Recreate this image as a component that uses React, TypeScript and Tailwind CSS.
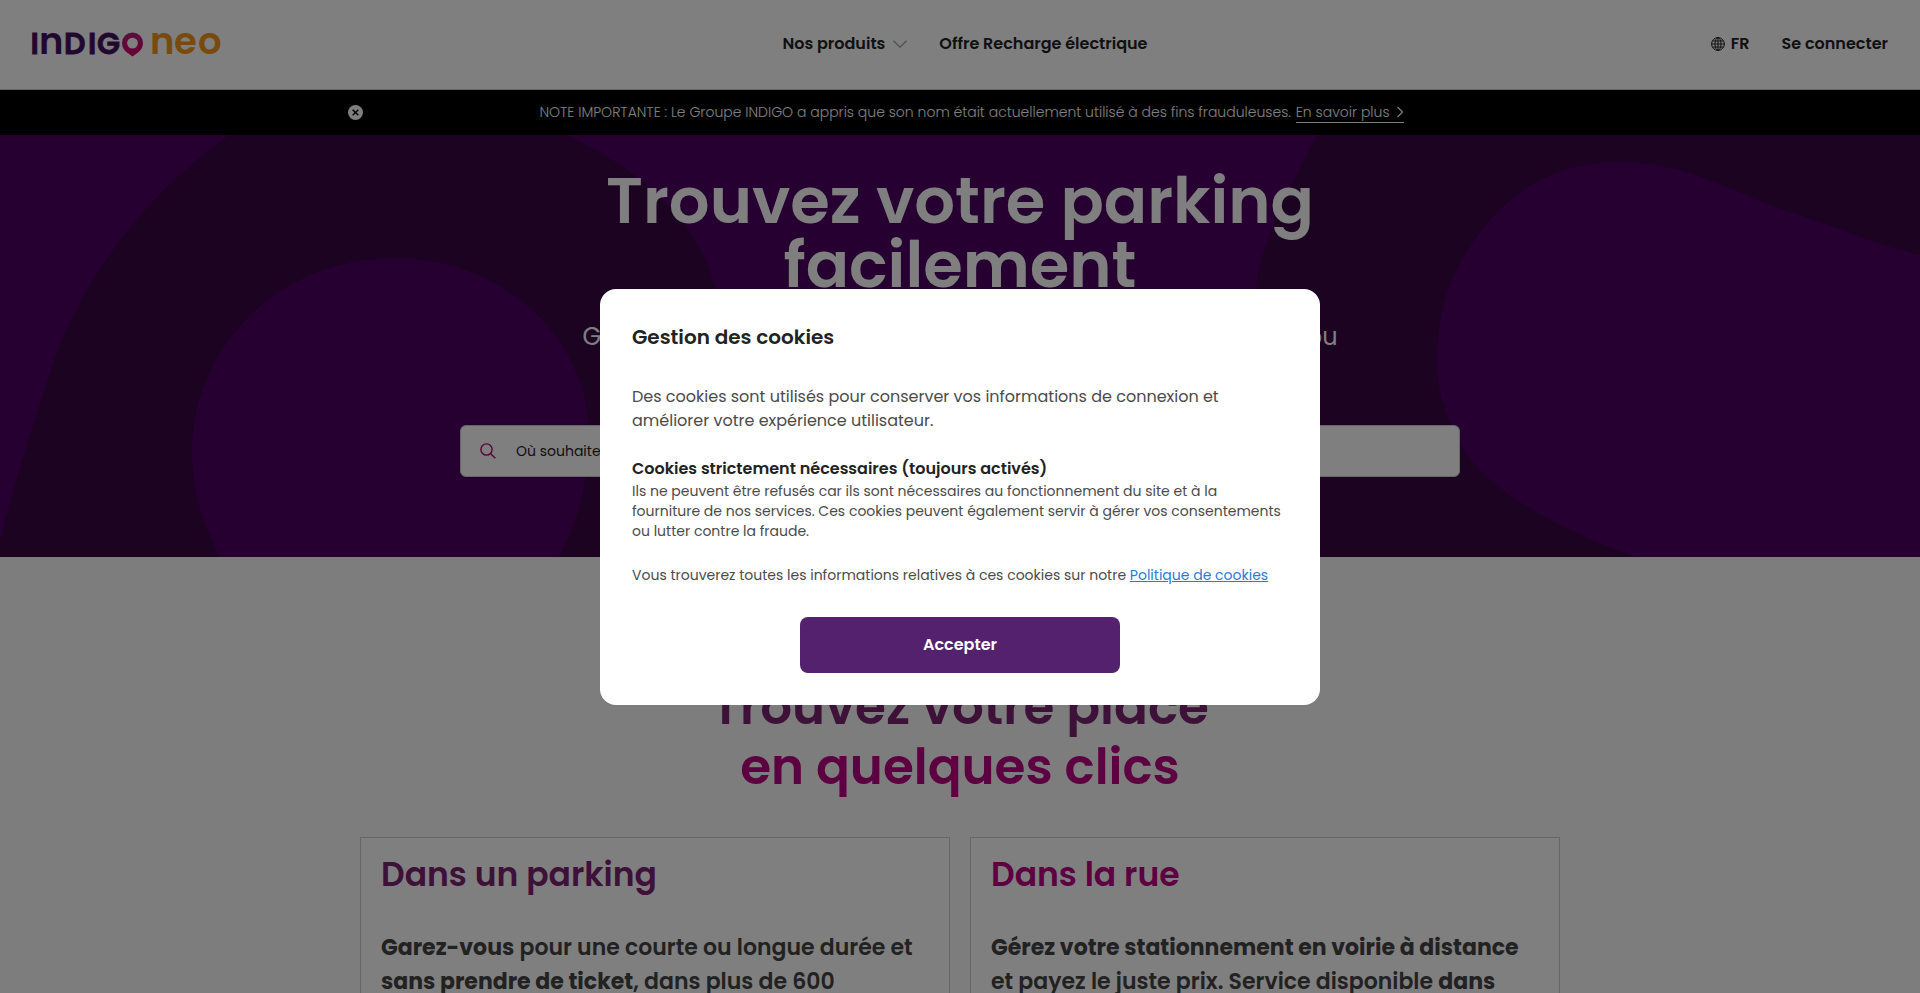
import React from "react";

function IndigoNeoLogo() {
  return (
    <svg
      width="190"
      height="24"
      viewBox="0 0 190 24"
      role="img"
      aria-label="INDIGO neo"
      className="block overflow-visible font-['Poppins',Inter,sans-serif] font-semibold"
    >
      <defs>
        <linearGradient id="pin" x1="0" y1="0" x2="0" y2="1">
          <stop offset="0" stopColor="#b4207c" />
          <stop offset="1" stopColor="#d6006e" />
        </linearGradient>
      </defs>
      <g fill="#43115f" fontSize="30">
        <g stroke="#43115f" strokeWidth="0.8">
          <text x="-1.500" y="21.500">I</text>
          <text x="32" y="21.500">D</text>
          <text x="56" y="21.500">I</text>
          <text x="65" y="21.500">G</text>
        </g>
        <text x="7" y="21.500" fontSize="37">n</text>
      </g>
      <path
        fill="url(#pin)"
        fillRule="evenodd"
        d="M100.5.5A10.500 10.500 0 0 0 90 11c0 4.200 2.100 7.300 5 9.400l5.500 4 5.500-4c2.900-2.100 5-5.200 5-9.400A10.500 10.500 0 0 0 100.500.5Zm0 5.200a5.400 5.400 0 1 1 0 10.800 5.400 5.400 0 0 1 0-10.800Z"
      />
      <g fill="#f0951c" fontSize="37">
        <text x="118" y="21.500">n</text>
        <text x="142" y="21.500">e</text>
        <text x="166" y="21.500">o</text>
      </g>
    </svg>
  );
}

function GlobeIcon() {
  return (
    <svg width="14" height="14" viewBox="0 0 14 14" fill="none" stroke="currentColor" strokeWidth="1" aria-hidden="true">
      <circle cx="7" cy="7" r="6.400" />
      <ellipse cx="7" cy="7" rx="3" ry="6.400" />
      <path d="M7 .6v12.800M.6 7h12.800M1.400 4h11.200M1.400 10h11.200" />
    </svg>
  );
}

function Header() {
  return (
    <header className="grid h-[90px] shrink-0 grid-cols-[1fr_auto_1fr] items-center border-b border-[#ccc] bg-white px-8 pb-0.5 text-base font-semibold text-[#222]">
      <a href="#accueil" className="w-fit">
        <IndigoNeoLogo />
      </a>
      <nav aria-label="Navigation principale" className="flex items-center gap-8 pl-2.5">
        <button type="button" className="flex items-center gap-2 font-semibold">
          Nos produits
          <svg width="14" height="8" viewBox="0 0 14 8" fill="none" stroke="#a0a0a0" strokeWidth="1.2" aria-hidden="true">
            <path d="M.5.8 7 7.200 13.500.8" />
          </svg>
        </button>
        <a href="#recharge">Offre Recharge électrique</a>
      </nav>
      <div className="flex items-center gap-8 justify-self-end">
        <button type="button" className="flex items-center gap-1.5 font-semibold">
          <GlobeIcon />
          FR
        </button>
        <a href="#connexion">Se connecter</a>
      </div>
    </header>
  );
}

function NoticeBar() {
  return (
    <div className="flex h-[45px] shrink-0 justify-center bg-black text-white">
      <div className="flex w-full max-w-[1224px] items-center">
        <button type="button" aria-label="Fermer" className="shrink-0">
          <svg width="15" height="15" viewBox="0 0 15 15" aria-hidden="true">
            <circle cx="7.500" cy="7.500" r="7.500" fill="#fff" />
            <path d="M4.700 4.700l5.600 5.600M10.300 4.700l-5.600 5.600" stroke="#000" strokeWidth="1.500" />
          </svg>
        </button>
        <p className="flex grow justify-center gap-[5px] pl-2 text-sm font-light">
          <span>
            NOTE IMPORTANTE : Le Groupe INDIGO a appris que son nom était actuellement utilisé à des fins frauduleuses.
          </span>
          <a href="#note" className="flex items-center gap-1.5 border-b border-white">
            En savoir plus
            <svg width="8" height="12" viewBox="0 0 8 12" fill="none" stroke="currentColor" strokeWidth="1.200" aria-hidden="true">
              <path d="M1.500 1 6.500 6 1.500 11" />
            </svg>
          </a>
        </p>
      </div>
    </div>
  );
}

function HeroBackdrop() {
  return (
    <svg
      className="absolute inset-0 h-full w-full"
      viewBox="0 0 1920 422"
      preserveAspectRatio="xMidYMid slice"
      aria-hidden="true"
    >
      <rect width="1920" height="422" fill="#4c0060" />
      <path
        fill="#380644"
        fillRule="evenodd"
        d="M229 0C135 68 82 150 53 228C33 290 17 340 0 405V422H720V180C712 110 670 50 567 0ZM220 422C200 385 192 350 192 318C192 210 280 123 395 123C505 123 589 205 589 300C589 345 577 390 559 422Z"
      />
      <path
        fill="#380644"
        d="M1317 0C1292 50 1262 100 1256 154C1240 250 1240 340 1250 422H1635C1540 388 1478 345 1460 308C1445 280 1437 255 1437 228C1437 180 1448 145 1468 115C1500 62 1550 27 1619 27C1680 27 1720 50 1770 70L1843 95C1870 106 1895 114 1920 120V0Z"
      />
    </svg>
  );
}

function Hero() {
  return (
    <section className="relative h-[422px] shrink-0 overflow-hidden">
      <HeroBackdrop />
      <div className="relative flex flex-col items-center px-8 pt-[34px] text-center">
        <h1 className="max-w-[800px] text-[64px] leading-16 font-semibold text-white">Trouvez votre parking facilement</h1>
        <p className="mt-[22px] h-[72px] text-2xl leading-9 font-normal whitespace-nowrap text-white">
          Garez-vous en quelques clics en rue, en gare, en centre ville ou
          <br />
          dans nos parkings
        </p>
        <form className="mt-[34px] w-full max-w-[1000px]">
          <label className="flex h-[52px] items-center gap-5 rounded-md border border-[#ccc] bg-white px-[19px]">
            <svg width="16" height="16" viewBox="0 0 16 16" fill="none" stroke="#b80070" strokeWidth="1.400" aria-hidden="true">
              <circle cx="6.500" cy="6.500" r="5.600" />
              <path d="M10.500 10.500 15.300 15.300" />
            </svg>
            <input
              type="text"
              aria-label="Destination"
              placeholder="Où souhaitez-vous stationner ?"
              className="grow bg-transparent text-sm text-[#222] outline-none placeholder:text-[#222]"
            />
          </label>
        </form>
      </div>
    </section>
  );
}

function Places() {
  return (
    <section className="grow bg-[#fafafa] px-8 pt-[120px]">
      <h2 className="text-center text-[50px] leading-[60px] font-semibold text-[#7c2272]">
        Trouvez votre place
        <span className="block text-[#b80082]">en quelques clics</span>
      </h2>
      <div className="mx-auto mt-10 grid w-full max-w-[1200px] grid-cols-2 gap-5">
        <article className="border border-[#ccc] bg-white px-5 pt-[9px] pb-10">
          <h3 className="text-[33px] leading-[56px] font-semibold text-[#7c2272]">Dans un parking</h3>
          <p className="mt-7 text-[22px] leading-[34px] font-semibold text-[#444]">
            <strong className="font-bold">Garez-vous</strong> pour une courte ou longue durée et{" "}
            <strong className="font-bold">sans prendre de ticket</strong>, dans plus de 600 parkings.
          </p>
        </article>
        <article className="border border-[#ccc] bg-white px-5 pt-[9px] pb-10">
          <h3 className="text-[33px] leading-[56px] font-semibold text-[#b80082]">Dans la rue</h3>
          <p className="mt-7 text-[22px] leading-[34px] font-semibold text-[#444]">
            <strong className="font-bold">Gérez votre stationnement en voirie à distance</strong> et payez le juste
            prix. Service disponible <strong className="font-bold">dans plusieurs villes</strong>.
          </p>
        </article>
      </div>
    </section>
  );
}

function CookieDialog() {
  return (
    <div className="fixed inset-0 flex items-center justify-center bg-black/50 p-4">
      <div
        role="dialog"
        aria-modal="true"
        aria-labelledby="cookie-title"
        className="w-full max-w-[720px] rounded-2xl bg-white p-8 text-[#4b4b4b]"
      >
        <h2 id="cookie-title" className="text-xl leading-8 font-semibold text-[#222]">
          Gestion des cookies
        </h2>
        <p className="mt-8 text-base leading-6">
          Des cookies sont utilisés pour conserver vos informations de connexion et améliorer votre expérience
          utilisateur.
        </p>
        <h3 className="mt-6 text-base leading-6 font-semibold text-[#222]">
          Cookies strictement nécessaires (toujours activés)
        </h3>
        <p className="text-sm leading-5">
          Ils ne peuvent être refusés car ils sont nécessaires au fonctionnement du site et à la fourniture de nos
          services. Ces cookies peuvent également servir à gérer vos consentements ou lutter contre la fraude.
        </p>
        <p className="mt-6 text-sm leading-5">
          Vous trouverez toutes les informations relatives à ces cookies sur notre{" "}
          <a href="#cookies" className="text-[#2b7cd8] underline">
            Politique de cookies
          </a>
        </p>
        <button
          type="button"
          className="mx-auto mt-8 block h-14 w-[320px] rounded-lg bg-[#54216f] text-base font-semibold text-white"
        >
          Accepter
        </button>
      </div>
    </div>
  );
}

export default function App() {
  return (
    <div className="flex h-screen flex-col overflow-hidden font-['Poppins',Inter,sans-serif]">
      <Header />
      <main className="flex grow flex-col">
        <NoticeBar />
        <Hero />
        <Places />
      </main>
      <CookieDialog />
    </div>
  );
}
